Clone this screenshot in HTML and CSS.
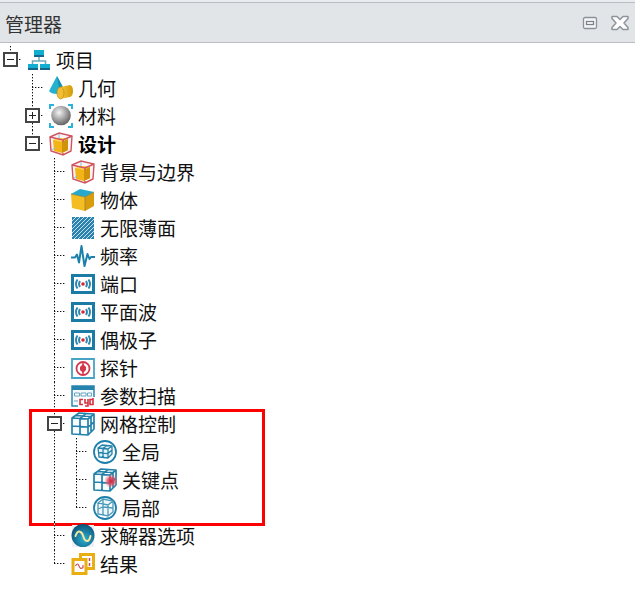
FILE: index.html
```html
<!DOCTYPE html>
<html lang="zh-CN">
  <head>
    <meta charset="UTF-8" />
    <meta name="viewport" content="width=device-width, initial-scale=1.0" />
    <title>管理器</title>
    <link rel="stylesheet" href="styles.css">
  </head>
  <body>
    <svg class="defs" aria-hidden="true">
      <defs>
        <radialGradient id="ball" cx="0.4" cy="0.35" r="0.65">
          <stop offset="0" stop-color="#f4f4f4" />
          <stop offset="0.45" stop-color="#b4b4b4" />
          <stop offset="1" stop-color="#666" />
        </radialGradient>
        <radialGradient id="globe" cx="0.55" cy="0.65" r="0.65">
          <stop offset="0" stop-color="#2bb0d0" />
          <stop offset="1" stop-color="#0c5078" />
        </radialGradient>
        <radialGradient id="spot">
          <stop offset="0" stop-color="#d81e38" />
          <stop offset="0.5" stop-color="#e04a60" stop-opacity="0.8" />
          <stop offset="1" stop-color="#e8808c" stop-opacity="0" />
        </radialGradient>
        <linearGradient id="gold">
          <stop offset="0" stop-color="#f8c840" />
          <stop offset="1" stop-color="#d29a08" />
        </linearGradient>
        <symbol id="bounds" viewBox="0 0 24 24">
          <path d="M1 5l9-4 13 3-1 15-8 4-12-4z" fill="#fdf3f2" />
          <path d="M4 8l7-2 8 1v11l-6 3-8-2z" fill="#f2b417" />
          <path d="M4 8l7-2 8 1-6 3z" fill="#ffd650" />
          <path d="M13 10l6-3v11l-6 3z" fill="#cf9208" />
          <path d="M1 5l9-4 13 3-1 15-8 4-12-4zM1 5l13 3 9-4M14 8v2M14 21v2" fill="none" stroke="#cf5360" stroke-width="1.4" />
          <path d="M10 2v4M3 18l3-2" stroke="#7cc2dc" />
        </symbol>
        <symbol id="wave" viewBox="0 0 24 24">
          <path d="M1.5 3.5h21v17h-21z" fill="#fff" stroke="#1b7ba5" stroke-width="3" />
          <circle cx="12" cy="12" r="1.8" fill="#e02436" />
          <path d="M9 9q-2 3 0 6M15 9q2 3 0 6M6.5 7.500q-3 4.500 0 9M17.500 7.500q3 4.500 0 9" fill="none" stroke="#2c86ad" stroke-width="1.9" />
        </symbol>
        <symbol id="mesh" viewBox="0 0 24 24">
          <path d="M1 6l16 1v16L1 22zM1 6l7-5 15 1-6 5M23 2v15l-6 6M9 6.500v16M1 14l16 1 6-5M9 6.500l6-5M5 3.500l15 1v16" fill="#eef8fc" fill-opacity="0.3" stroke="#2381aa" stroke-width="1.7" stroke-linejoin="round" />
        </symbol>
      </defs>
    </svg>

    <header class="titlebar">
      <h1>管理器</h1>
      <div class="window-buttons">
        <button type="button" aria-label="还原">
          <svg width="16" height="16" viewBox="0 0 16 16">
            <rect x="1.5" y="2.500" width="13" height="11" rx="1.5" fill="#f5f6f7" stroke="#8d9299" stroke-width="1.3" />
            <rect x="4.500" y="6.500" width="7" height="3" fill="#fff" stroke="#7d828a" stroke-width="1.3" />
          </svg>
        </button>
        <button type="button" aria-label="关闭">
          <svg width="18" height="16" viewBox="0 0 18 16">
            <path d="M1 1.500h5l3 3 3-3h5v2L13 8l4 4.500v2h-5l-3-3-3 3H1v-2L5 8 1 3.500z" fill="#fff" stroke="#8f949b" stroke-width="1.5" stroke-linejoin="round" />
          </svg>
        </button>
      </div>
    </header>

    <main>
      <ul class="tree">
        <li class="root">
          <div class="row">
            <button class="toggle" type="button" aria-label="项目" aria-expanded="true"></button>
            <svg class="icon" viewBox="0 0 24 24">
              <path d="M12 8v5M5.500 17v-4h13v4" fill="none" stroke="#6fa9bd" stroke-width="1.5" />
              <path d="M7 2h10v7H7zM1 16h10v6H1zM13 16h10v6H13z" fill="#12aed0" />
              <path d="M7 7h10v2H7zM1 20h10v2H1zM13 20h10v2H13z" fill="#17658a" />
            </svg>
            <span class="label">项目</span>
          </div>
          <ul>
            <li>
              <div class="row">
                <svg class="icon" viewBox="0 0 24 24">
                  <path d="M8 0l8 15q-2 3-8 3-6 0-8-3z" fill="#22b2d0" />
                  <path d="M8 0l8 15q-2 3-5 3z" fill="#178eaf" />
                  <path d="M11 11l10-2q3 1 3 6t-3 6l-10 2z" fill="url(#gold)" />
                  <ellipse cx="11.500" cy="17" rx="3.500" ry="6" fill="#f1bd35" stroke="#c28b0a" stroke-width="0.7" />
                </svg>
                <span class="label">几何</span>
              </div>
            </li>
            <li>
              <div class="row">
                <button class="toggle" type="button" aria-label="材料" aria-expanded="false"></button>
                <svg class="icon" viewBox="0 0 24 24">
                  <circle cx="12" cy="11.500" r="9.800" fill="url(#ball)" />
                  <path d="M1 5V1h4M19 1h4v4M23 19v4h-4M5 23H1v-4" fill="none" stroke="#2bb2dc" stroke-width="2" />
                </svg>
                <span class="label">材料</span>
              </div>
            </li>
            <li>
              <div class="row">
                <button class="toggle" type="button" aria-label="设计" aria-expanded="true"></button>
                <svg class="icon"><use href="#bounds" /></svg>
                <span class="label active">设计</span>
              </div>
              <ul>
                <li>
                  <div class="row">
                    <svg class="icon"><use href="#bounds" /></svg>
                    <span class="label">背景与边界</span>
                  </div>
                </li>
                <li>
                  <div class="row">
                    <svg class="icon" viewBox="0 0 24 24">
                      <path d="M0 6l14 3v14L1 20z" fill="#f4bd22" />
                      <path d="M14 9l9-5v14l-9 5z" fill="#d89c0d" />
                      <path d="M0 6l9-5 14 3-9 5z" fill="#28a9cb" />
                      <path d="M0 6l14 3 9-5M14 9v14" fill="none" stroke="#8c8030" stroke-width="0.7" />
                    </svg>
                    <span class="label">物体</span>
                  </div>
                </li>
                <li>
                  <div class="row">
                    <svg class="icon" viewBox="0 0 24 24">
                      <path d="M1 1h22v22H1z" fill="#2b82ad" />
                      <path d="M1 5l4-4M1 9l8-8M1 13L13 1M1 17L17 1M1 21L21 1M3 23L23 3M7 23L23 7M11 23l12-12M15 23l8-8M19 23l4-4" stroke="#c5e3f0" />
                    </svg>
                    <span class="label">无限薄面</span>
                  </div>
                </li>
                <li>
                  <div class="row">
                    <svg class="icon" viewBox="0 0 24 24">
                      <path d="M0 13.500h4l2-3 2 8L10.500 2l3 20 3-12 2 5 1.500-2h4" fill="none" stroke="#1b80aa" stroke-width="2" stroke-linejoin="round" />
                    </svg>
                    <span class="label">频率</span>
                  </div>
                </li>
                <li>
                  <div class="row">
                    <svg class="icon"><use href="#wave" /></svg>
                    <span class="label">端口</span>
                  </div>
                </li>
                <li>
                  <div class="row">
                    <svg class="icon"><use href="#wave" /></svg>
                    <span class="label">平面波</span>
                  </div>
                </li>
                <li>
                  <div class="row">
                    <svg class="icon"><use href="#wave" /></svg>
                    <span class="label">偶极子</span>
                  </div>
                </li>
                <li>
                  <div class="row">
                    <svg class="icon" viewBox="0 0 24 24">
                      <path d="M1 3h22v19H1z" fill="#fff" stroke="#48a4c4" stroke-width="1.8" />
                      <circle cx="12" cy="12.500" r="6.500" fill="#fff" stroke="#d23a4c" stroke-width="1.8" />
                      <path d="M12 6v13" stroke="#d23a4c" stroke-width="1.5" />
                      <path d="M12 8l3 3v3l-3 3-3-3v-3z" fill="#d23a4c" />
                    </svg>
                    <span class="label">探针</span>
                  </div>
                </li>
                <li>
                  <div class="row">
                    <svg class="icon" viewBox="0 0 24 24">
                      <path d="M1 2h22v20H1z" fill="#f4fafc" stroke="#2d86ad" stroke-width="1.5" />
                      <path d="M1 2h22v4H1z" fill="#2584ae" />
                      <path d="M3.500 9h5v3h-5zM10 9h5v3h-5zM16.500 9h4v3h-4z" fill="#fff" stroke="#68a5bf" />
                      <path d="M3 17h4" stroke="#68a5bf" />
                      <path d="M7 13h17v10H7z" fill="#fff" />
                      <path d="M12 15.500H9v5h3M14 15v4h3v-4M17 19v3h-3M22 14v6.500h-3v-5h3" fill="none" stroke="#d4303e" stroke-width="1.6" />
                    </svg>
                    <span class="label">参数扫描</span>
                  </div>
                </li>
                <li class="marked">
                  <div class="row">
                    <button class="toggle" type="button" aria-label="网格控制" aria-expanded="true"></button>
                    <svg class="icon"><use href="#mesh" /></svg>
                    <span class="label">网格控制</span>
                  </div>
                  <ul>
                    <li>
                      <div class="row">
                        <svg class="icon" viewBox="0 0 24 24">
                          <circle cx="12" cy="12" r="11" fill="#fff" stroke="#1f7fab" stroke-width="1.8" />
                          <path d="M5 8l10 1v9L6 17zM5 8l4-3 10 1-4 3M19 6v8l-4 4M10 17.500v-9l4-3M5.500 12.500l9.500 1 4-3.500" fill="#e3f2f8" stroke="#2381aa" stroke-width="1.3" stroke-linejoin="round" />
                        </svg>
                        <span class="label">全局</span>
                      </div>
                    </li>
                    <li>
                      <div class="row">
                        <svg class="icon" viewBox="0 0 24 24">
                          <use href="#mesh" />
                          <circle cx="18" cy="13" r="7" fill="url(#spot)" />
                        </svg>
                        <span class="label">关键点</span>
                      </div>
                    </li>
                    <li>
                      <div class="row">
                        <svg class="icon" viewBox="0 0 24 24">
                          <circle cx="12" cy="12" r="11" fill="#fff" stroke="#1f7fab" stroke-width="1.8" />
                          <path d="M5 7l5-4 10 2-5 4zM5 7v11l10 2V9M15 20l5-4V5M5 13l5-2 10 1M10 3v16" fill="#e3f2f8" fill-opacity="0.6" stroke="#4a9aba" stroke-width="1.3" />
                        </svg>
                        <span class="label">局部</span>
                      </div>
                    </li>
                  </ul>
                </li>
                <li>
                  <div class="row">
                    <svg class="icon" viewBox="0 0 24 24">
                      <path d="M1 1h22v22H1z" fill="#edf0f2" />
                      <circle cx="12" cy="11.500" r="11.500" fill="url(#globe)" />
                      <path d="M4.500 12q2-6 5-4 2 1 3 5t4 4q2-.5 3-5" fill="none" stroke="#f4e6a0" stroke-width="2" stroke-linecap="round" />
                    </svg>
                    <span class="label">求解器选项</span>
                  </div>
                </li>
                <li>
                  <div class="row">
                    <svg class="icon" viewBox="0 0 24 24">
                      <path d="M9.500 2.500h13v14h-13z" fill="#fff" stroke="#e9ae12" stroke-width="3" />
                      <path d="M18.500 6v3M18.500 11v3" stroke="#c64b55" stroke-width="1.5" />
                      <path d="M2 7.500h13v14H2z" fill="#fff" stroke="#e9ae12" stroke-width="3" />
                      <path d="M4.500 14q2-4 3.500 0t4 1.500V13" fill="none" stroke="#d0545a" stroke-width="1.2" />
                    </svg>
                    <span class="label">结果</span>
                  </div>
                </li>
              </ul>
            </li>
          </ul>
        </li>
      </ul>
    </main>
  </body>
</html>
```
FILE: styles.css
```css
*,
*::before,
*::after {
  margin: 0;
  padding: 0;
  box-sizing: border-box;
}

body {
  background: #fff;
  color: #111;
  font-family: "Noto Sans CJK SC", sans-serif;
  font-size: 19px;
}

button {
  border: 0;
  background: none;
  cursor: pointer;
}

.defs {
  position: absolute;
  width: 0;
  height: 0;
}

.titlebar {
  display: flex;
  align-items: center;
  justify-content: space-between;
  height: 43px;
  padding: 2px 6px 0 5px;
  background: #e1e5e8;
  border-top: 2px solid #e9ecee;
  border-bottom: 1px solid #b9bdc3;
  box-shadow: inset 0 1px #b9bdc3;
}
.titlebar h1 {
  font-size: 19px;
  font-weight: normal;
  color: #333;
}
.window-buttons {
  display: flex;
  align-items: center;
  gap: 13px;
}
.window-buttons svg {
  display: block;
}

/* tree */
ul {
  list-style: none;
}
.tree {
  padding: 3px 2px;
}
li {
  position: relative;
}
li ul {
  margin-left: 22px;
}
.row {
  display: flex;
  align-items: center;
  height: 28px;
  padding-left: 25px;
}
.icon {
  width: 24px;
  height: 24px;
  margin-right: 5px;
}
.label {
  line-height: 28px;
  white-space: nowrap;
}
.active {
  font-weight: bold;
  color: #000;
}

/* dotted connectors */
li::before {
  content: "";
  position: absolute;
  top: 0;
  bottom: 0;
  left: 8px;
  width: 1px;
  background: repeating-linear-gradient(#111 0 1px, #aaa 1px 2px, #fff 2px 3px);
}
li:last-child::before {
  bottom: auto;
  height: 14px;
}
.row::before {
  content: "";
  position: absolute;
  top: 13px;
  left: 8px;
  width: 11px;
  height: 1px;
  background: repeating-linear-gradient(90deg, #111 0 1px, #aaa 1px 2px, #fff 2px 3px);
}

.toggle {
  position: absolute;
  top: 6px;
  left: 1px;
  width: 15px;
  height: 15px;
  border: 2px solid #444;
  background: linear-gradient(#222, #222) center / 7px 1px no-repeat #fff;
}
.toggle[aria-expanded="false"] {
  background:
    linear-gradient(#222, #222) center / 7px 1px no-repeat,
    linear-gradient(#222, #222) center / 1px 7px no-repeat #fff;
}

/* highlight frame */
.marked::after {
  content: "";
  position: absolute;
  top: -1px;
  bottom: -4px;
  left: -17px;
  width: 236px;
  border: 3px solid #f00;
  pointer-events: none;
}
```
